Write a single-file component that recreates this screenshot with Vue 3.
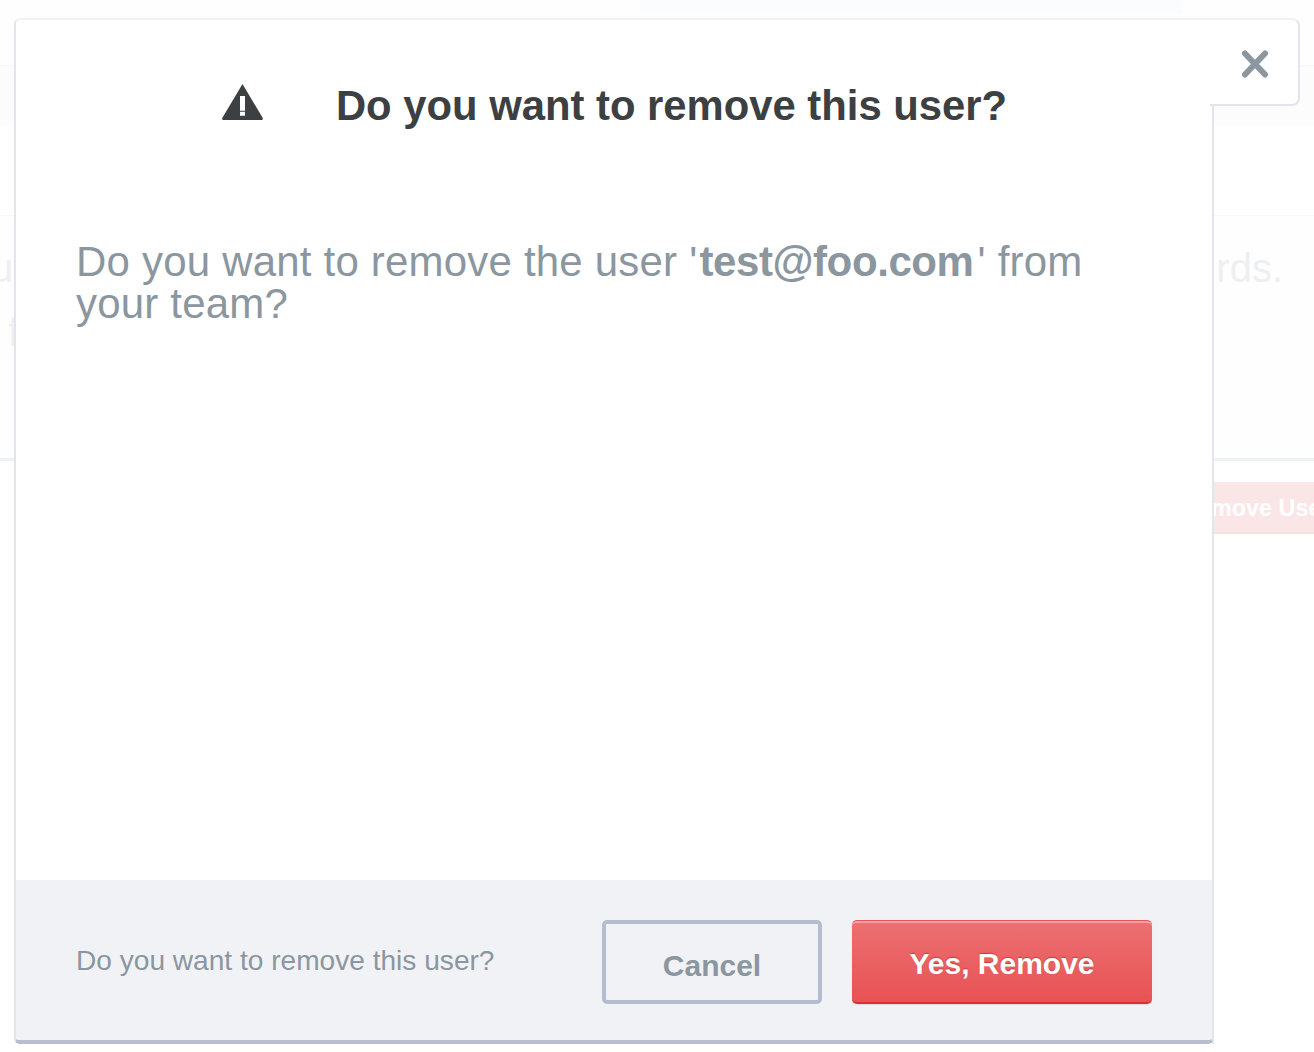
<script setup>
const title = 'Do you want to remove this user?'
</script>

<template>
  <div class="page">
    <div class="backdrop">
      <div class="bg-top"><div class="bg-tab"></div></div>
      <div class="bg-band"></div>
      <section class="bg-info">
        <p class="bg-line bg-line-a"><span>u</span><span>rds.</span></p>
        <p class="bg-line bg-line-b">f</p>
      </section>
      <div class="bg-row">
        <button class="bg-btn" type="button">Remove User</button>
      </div>
    </div>

    <div class="modal" role="dialog">
      <button class="close" type="button" aria-label="Close">
        <svg width="28" height="28" viewBox="0 0 28 28">
          <path d="M4 3.5 L24 24.5 M24 3.5 L4 24.5" stroke="#8b969f" stroke-width="6" stroke-linecap="round" fill="none" />
        </svg>
      </button>
      <header class="head">
        <svg class="warn" width="41" height="36" viewBox="0 0 41 36">
          <path fill-rule="evenodd" fill="#3c4043" d="M20.5 0 L40.6 33.8 Q41.4 36 39.6 36 L1.4 36 Q-0.4 36 0.4 33.8 Z M18 12 L18 26.7 L23 26.7 L23 12 Z M18 27.8 L18 31.8 L23 31.8 L23 27.8 Z" />
        </svg>
        <h1 class="title">{{ title }}</h1>
      </header>
      <div class="body">
        <p class="message">Do you want to remove the user '<strong>test@foo.com</strong>' from your team?</p>
      </div>
      <footer class="foot">
        <span class="hint">{{ title }}</span>
        <div class="actions">
          <button class="btn cancel" type="button">Cancel</button>
          <button class="btn danger" type="button">Yes, Remove</button>
        </div>
      </footer>
    </div>
  </div>
</template>

<style>
html, body { margin: 0; background: #fff; }
</style>

<style scoped>
.page {
  position: relative;
  width: 1314px;
  height: 1052px;
  overflow: hidden;
  background: #fff;
  font-family: "Liberation Sans", Arial, sans-serif;
}
.backdrop { display: flex; flex-direction: column; }
.bg-top { height: 65px; background: #fefefe; border-bottom: 1px solid #f6f6f8; }
.bg-tab { width: 543px; height: 13px; margin-left: 640px; background: #fbfcfe; }
.bg-band { height: 60px; background: #fcfcfc; }
.bg-info {
  margin-top: 89px;
  height: 242px;
  border-top: 1px solid #f8f8f9;
  border-bottom: 3px solid #f0f1f3;
  background: #fefefe;
  box-sizing: content-box;
  color: #eeeff1;
  font-size: 40px;
}
.bg-line { margin: 0; }
.bg-line-a { display: flex; justify-content: space-between; padding: 30px 31px 0 0; line-height: 44px; margin-left: -9px; }
.bg-line-b { padding: 20px 0 0 8px; line-height: 44px; }
.bg-row { display: flex; justify-content: flex-end; padding-top: 21px; }
.bg-btn {
  flex: none;
  width: 284px;
  height: 52px;
  margin-right: -115px;
  padding: 0 0 0 36px;
  text-align: left;
  box-sizing: border-box;
  border: 0;
  border-top: 3px solid #fbe7e7;
  border-bottom: 2px solid #fadfdf;
  background: #fbe6e7;
  color: #fff;
  font: bold 23.4px "Liberation Sans", Arial, sans-serif;
  white-space: nowrap;
}
.modal {
  position: absolute;
  left: 14px;
  top: 18px;
  width: 1200px;
  height: 1026px;
  box-sizing: border-box;
  display: flex;
  flex-direction: column;
  background: #fff;
  border: 2px solid #e2e5ec;
  border-top-color: #f0f1f5;
  border-bottom: 0;
  border-radius: 6px 0 0 6px;
}
.close {
  position: absolute;
  top: -2px;
  right: -88px;
  width: 90px;
  height: 88px;
  padding: 0;
  box-sizing: border-box;
  display: flex;
  align-items: center;
  justify-content: center;
  background: #fff;
  border: 2px solid #e2e5ec;
  border-top-color: #f0f1f5;
  border-left: 0;
  border-radius: 0 8px 8px 0;
}
.close svg { margin-left: 1px; margin-top: 4px; }
.head {
  height: 170px;
  box-sizing: border-box;
  display: flex;
  align-items: center;
  justify-content: center;
  gap: 73px;
  padding-left: 1px;
  flex: none;
}
.warn { margin-bottom: 6px; flex: none; }
.title {
  margin: 2px 0 0;
  font-size: 41.8px;
  line-height: 44px;
  font-weight: 700;
  color: #3c4043;
  white-space: nowrap;
}
.body { flex: 1; padding: 51px 60px 0; }
.message {
  margin: 0;
  font-size: 42px;
  line-height: 42px;
  letter-spacing: 0.2px;
  color: #8b969f;
}
.message strong { font-weight: 700; letter-spacing: -0.4px; margin-left: 2px; margin-right: 4px; }
.foot {
  height: 164px;
  box-sizing: border-box;
  margin: 0 0 0 -2px;
  width: calc(100% + 4px);
  padding: 0 60px;
  display: flex;
  align-items: flex-start;
  justify-content: space-between;
  background: #f1f2f6;
  border: 2px solid #e2e5ec;
  border-top: 0;
  border-bottom: 4px solid #b8bdd0;
  border-radius: 0 0 6px 6px;
  flex: none;
}
.hint {
  margin-top: 63px;
  font-size: 28.1px;
  line-height: 36px;
  color: #8b969f;
}
.actions { display: flex; gap: 30px; margin-top: 40px; }
.btn {
  height: 84px;
  box-sizing: border-box;
  border-radius: 5px;
  font: bold 30px "Liberation Sans", Arial, sans-serif;
  padding: 0;
}
.cancel {
  width: 220px;
  background: transparent;
  border: 4px solid #b5bcd0;
  color: #8b969f;
  padding-top: 8px;
}
.danger {
  width: 300px;
  padding-top: 4px;
  color: #fff;
  border: 0;
  border-top: 1px solid #e8575a;
  border-bottom: 2px solid #e22c2e;
  background: linear-gradient(#ec7072, #e85254);
  box-shadow: inset 0 2px 0 #f3a0a0, 0 1px 1px #d9dadf;
  text-shadow: 0 -1px 1px #c93b3e;
}
</style>
